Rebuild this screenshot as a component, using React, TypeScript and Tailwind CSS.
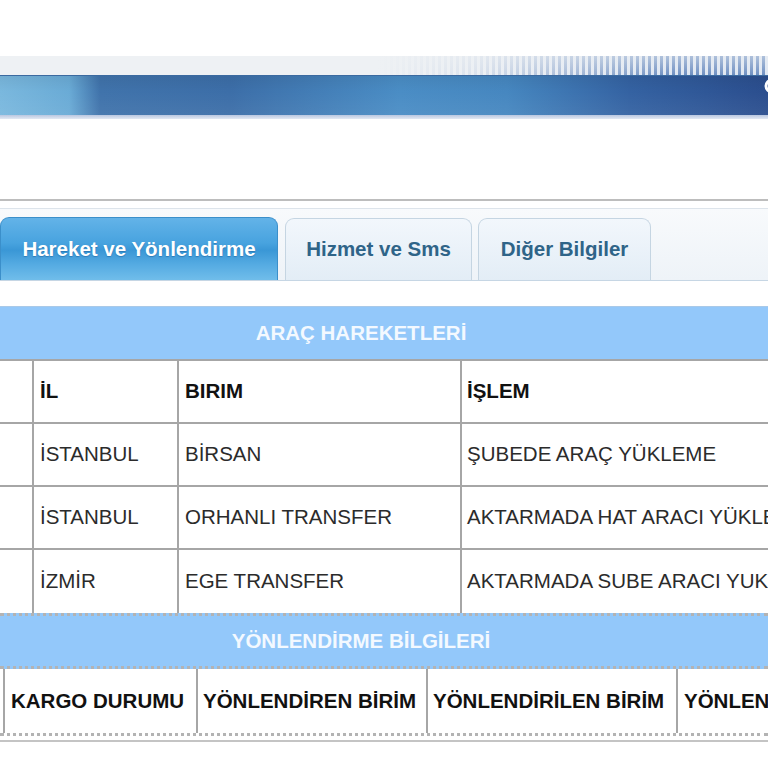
import React from 'react';

const hareketRows = [
  ['İSTANBUL', 'BİRSAN', 'ŞUBEDE ARAÇ YÜKLEME'],
  ['İSTANBUL', 'ORHANLI TRANSFER', 'AKTARMADA HAT ARACI YÜKLEME'],
  ['İZMİR', 'EGE TRANSFER', 'AKTARMADA SUBE ARACI YUKLEME'],
];

function Banner() {
  return (
    <div className="relative">
      <div className="flex h-[19px] bg-[#eef1f4]">
        <div className="flex-1" />
        <div className="w-[390px] bg-[linear-gradient(90deg,#eef1f4_0%,rgba(238,241,244,0.85)_25%,rgba(238,241,244,0)_75%),linear-gradient(180deg,rgba(238,241,244,0.5),rgba(238,241,244,0)),repeating-linear-gradient(90deg,#6f90c2_0px,#6f90c2_3px,#dfe7f2_3px,#dfe7f2_6px)]" />
      </div>
      <div className="h-[40px] border-t border-[#3b6aa0] bg-[linear-gradient(90deg,#7ab8de_0%,#6aabd6_9%,#4073ab_13%,#3c6ea8_30%,#4a8dc5_52%,#4687c0_66%,#3462a2_82%,#2b4e8e_100%)]">
        <div className="h-full bg-[linear-gradient(180deg,rgba(0,0,0,0.06)_0%,rgba(255,255,255,0)_40%,rgba(255,255,255,0.05)_100%)]" />
      </div>
      <div className="h-[4px] bg-[linear-gradient(180deg,#b9c7e0,#e3e9f3)]" />
      <svg className="absolute right-[-6px] top-[22px]" width="12" height="16" viewBox="0 0 12 16">
        <path d="M10 2 A6 6 0 1 0 10 14" fill="none" stroke="#fff" strokeWidth="3" />
      </svg>
    </div>
  );
}

function Tabs() {
  return (
    <div>
      <div className="h-[2px] bg-[#bdbdbd]" />
      <div className="h-[8px] border-b border-[#dde4eb] bg-white" />
      <div className="flex h-[72px] items-end gap-[6px] border-b border-[#c6d6e4] bg-[linear-gradient(180deg,#f8fafc,#eef3f8)]">
        <div className="flex h-[63px] w-[278px] items-center justify-center rounded-t-[9px] border border-b-0 border-[#3b8fca] bg-[linear-gradient(180deg,#63b3e8_0%,#48a3df_40%,#3a97d6_52%,#55abe2_75%,#70bdea_100%)] text-[20.5px] font-bold text-white [text-shadow:0_1px_1px_rgba(0,60,120,0.35)]">
          Hareket ve Yönlendirme
        </div>
        <div className="ml-[1px] flex h-[62px] w-[187px] items-center justify-center rounded-t-[9px] border border-b-0 border-[#c5d5e2] bg-[linear-gradient(180deg,#f2f7fc,#e3edf6)] text-[20.5px] font-bold text-[#2f6488]">
          Hizmet ve Sms
        </div>
        <div className="flex h-[62px] w-[173px] items-center justify-center rounded-t-[9px] border border-b-0 border-[#c5d5e2] bg-[linear-gradient(180deg,#f2f7fc,#e3edf6)] text-[20.5px] font-bold text-[#2f6488]">
          Diğer Bilgiler
        </div>
      </div>
    </div>
  );
}

function HareketTable() {
  const cell = 'flex items-center border-r-2 border-[#a6a6a6] whitespace-nowrap';
  return (
    <div>
      <div className="h-[55px] border-t border-[#a9c9e8] bg-[#93c8fa] border-b-2 border-b-[#a6a6a6]">
        <div className="flex h-full w-[722px] items-center justify-center text-[20.5px] font-bold text-[#f3f9ff]">
          ARAÇ HAREKETLERİ
        </div>
      </div>
      <div className="flex h-[63px] border-b-2 border-[#a6a6a6] text-[20.5px] font-bold text-[#111]">
        <div className={`${cell} w-[34px]`} />
        <div className={`${cell} w-[145px] pl-[6px]`}>İL</div>
        <div className={`${cell} w-[283px] pl-[6px]`}>BIRIM</div>
        <div className="flex flex-1 items-center whitespace-nowrap pl-[5px]">İŞLEM</div>
      </div>
      {hareketRows.map((r, i) => (
        <div
          key={i}
          className={`flex h-[63px] text-[20.5px] text-[#2b2b2b] ${i < hareketRows.length - 1 ? 'border-b-2 border-[#a6a6a6]' : ''}`}
        >
          <div className={`${cell} w-[34px]`} />
          <div className={`${cell} w-[145px] pl-[6px]`}>{r[0]}</div>
          <div className={`${cell} w-[283px] pl-[6px]`}>{r[1]}</div>
          <div className="flex min-w-0 flex-1 items-center overflow-hidden whitespace-nowrap pl-[5px]">{r[2]}</div>
        </div>
      ))}
    </div>
  );
}

function YonlendirmeTable() {
  const cell = 'flex shrink-0 items-center border-r-2 border-[#a6a6a6] whitespace-nowrap';
  return (
    <div>
      <div className="h-[56px] border-y-[3px] border-dotted border-[#b3b3b3] bg-[#93c8fa]">
        <div className="flex h-full w-[722px] items-center justify-center text-[20.5px] font-bold text-[#f3f9ff]">
          YÖNLENDİRME BİLGİLERİ
        </div>
      </div>
      <div className="flex h-[64px] text-[20.5px] font-bold text-[#111]">
        <div className={`${cell} w-[5px]`} />
        <div className={`${cell} w-[193px] pl-[6px]`}>KARGO DURUMU</div>
        <div className={`${cell} w-[230px] pl-[5px]`}>YÖNLENDİREN BİRİM</div>
        <div className={`${cell} w-[250px] pl-[5px]`}>YÖNLENDİRİLEN BİRİM</div>
        <div className="flex min-w-0 flex-1 items-center overflow-hidden whitespace-nowrap pl-[6px]">YÖNLENDİRME TARİHİ</div>
      </div>
      <div className="h-[3px] border-t-[3px] border-dotted border-[#b3b3b3]" />
      <div className="mt-[4px] h-[2px] bg-[#c4c4c4]" />
    </div>
  );
}

export default function App() {
  return (
    <div className="h-[768px] w-[768px] overflow-hidden bg-white font-['Liberation_Sans',Arial,sans-serif]">
      <div className="h-[56px]" />
      <Banner />
      <div className="h-[80px]" />
      <Tabs />
      <div className="h-[25px]" />
      <HareketTable />
      <YonlendirmeTable />
    </div>
  );
}
